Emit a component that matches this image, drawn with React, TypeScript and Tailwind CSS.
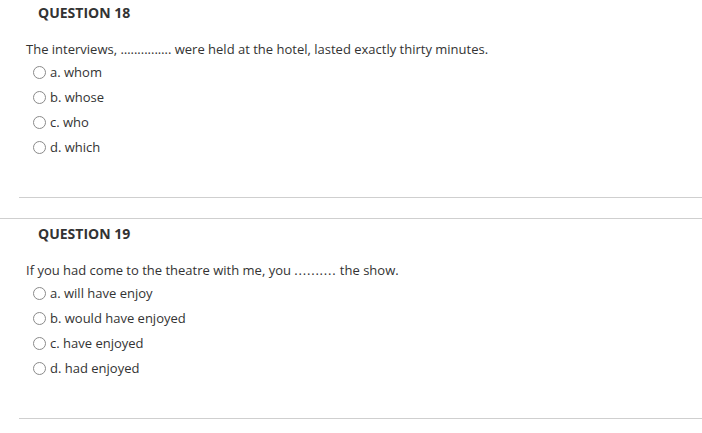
import React from "react";

interface QuestionProps {
    number: number;
    prompt: React.ReactNode;
    options: string[];
    first?: boolean;
}

function Radio() {
    return (
        <span className="inline-block w-[13px] h-[13px] rounded-full border border-[#8a8a8a] bg-white shrink-0" />
    );
}

function Question({ number, prompt, options, first }: QuestionProps) {
    return (
        <div className={first ? "pt-[3px]" : "border-t border-[#cfcfcf] pt-[5px] mt-[20px]"}>
            <h2 className="pl-[38px] h-[20px] leading-[20px] text-[14px] font-bold text-[#333]">
                QUESTION {number}
            </h2>
            <p className="mt-[17px] pl-[26px] h-[18px] leading-[18px] text-[13px] text-[#333]">{prompt}</p>
            <div className="mt-[2px] pl-[33px]">
                {options.map((opt) => (
                    <label key={opt} className="flex items-center gap-[4px] h-[25px] text-[13px] text-[#333]">
                        <Radio />
                        <span>{opt}</span>
                    </label>
                ))}
            </div>
            <div className="mt-[37px] ml-[19px] border-t border-[#cfcfcf]" />
        </div>
    );
}

export default function App() {
    return (
        <div className="w-[702px] h-[433px] overflow-hidden bg-white" style={{ fontFamily: '"Open Sans", sans-serif' }}>
            <Question
                first
                number={18}
                prompt="The interviews, …........…. were held at the hotel, lasted exactly thirty minutes."
                options={["a. whom", "b. whose", "c. who", "d. which"]}
            />
            <Question
                number={19}
                prompt={
                    <>
                        If you had come to the theatre with me, you <span className="tracking-[0.8px]">..........</span> the show.
                    </>
                }
                options={["a. will have enjoy", "b. would have enjoyed", "c. have enjoyed", "d. had enjoyed"]}
            />
        </div>
    );
}
